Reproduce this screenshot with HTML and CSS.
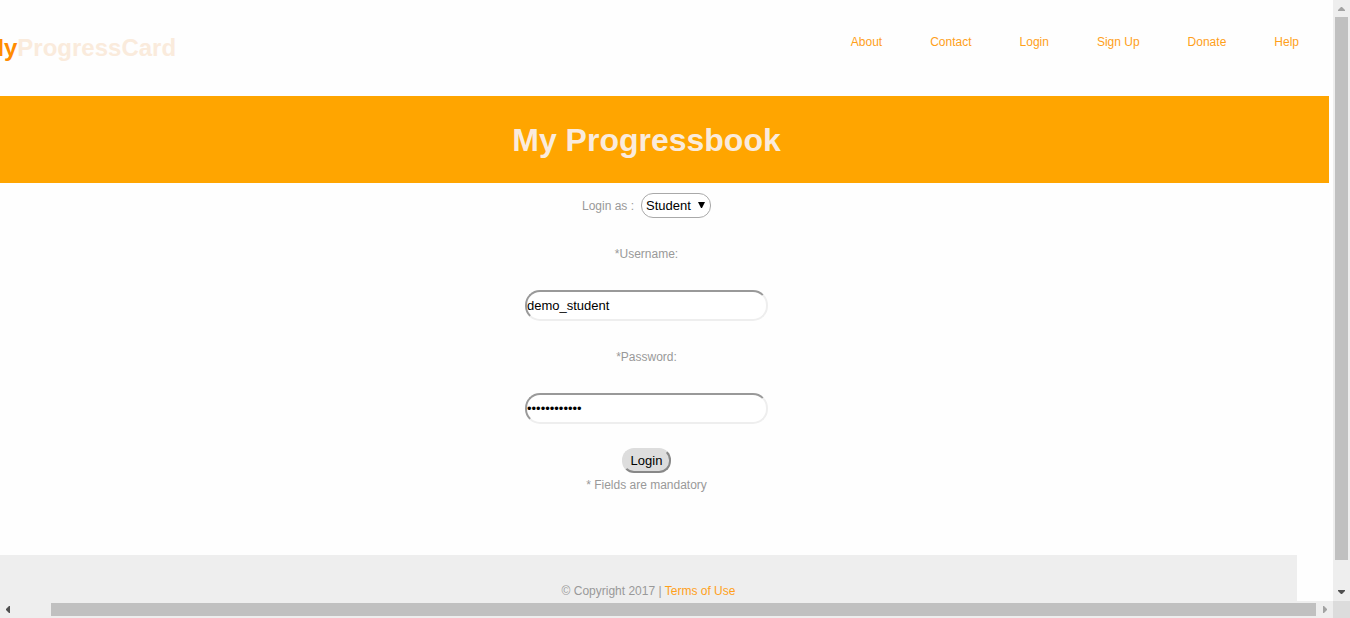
FILE: index.html
```html
<!DOCTYPE html>
<html lang="en">
<head>
<meta charset="utf-8">
<title>My Progressbook</title>
<link rel="stylesheet" href="styles.css">
</head>
<body>
<div class="viewport">
  <div class="page">
    <header class="header">
      <div class="logo"><span class="logo-accent">My</span>ProgressCard</div>
      <nav class="nav">
        <a href="#about">About</a>
        <a href="#contact">Contact</a>
        <a href="#login">Login</a>
        <a href="#signup">Sign Up</a>
        <a href="#donate">Donate</a>
        <a href="#help">Help</a>
      </nav>
    </header>
    <div class="banner"><h1>My Progressbook</h1></div>
    <form class="form">
      <div class="role">
        <label for="role">Login as :</label>
        <span class="select-wrap">
          <select id="role"><option>Student</option></select>
          <svg class="caret" width="8" height="8" viewBox="0 0 8 8" aria-hidden="true"><path d="M1 1h7L5 7H4z" fill="#000"/></svg>
        </span>
      </div>
      <label class="field-label" for="username">*Username:</label>
      <input class="field" id="username" type="text" value="demo_student">
      <label class="field-label" for="password">*Password:</label>
      <input class="field" id="password" type="password" value="studentdemo1">
      <button class="submit" type="button">Login</button>
      <p class="note">* Fields are mandatory</p>
    </form>
    <footer class="footer">© Copyright 2017 | <a href="#terms">Terms of Use</a></footer>
  </div>
  <div class="bar bar-vertical" aria-hidden="true">
    <svg class="arrow" viewBox="0 0 17 17"><path d="M5 11h7v-1L9 7H8L5 10z" fill="#a3a3a3"/></svg>
    <div class="thumb"></div>
    <svg class="arrow" viewBox="0 0 17 17"><path d="M5 6h7v1L9 10H8L5 7z" fill="#505050"/></svg>
  </div>
  <div class="bar bar-horizontal" aria-hidden="true">
    <svg class="arrow" viewBox="0 0 17 17"><path d="M10 5v7H9L6 9V8l3-3z" fill="#505050"/></svg>
    <div class="thumb"></div>
    <svg class="arrow" viewBox="0 0 17 17"><path d="M7 5v7h1l3-3V8L8 5z" fill="#a3a3a3"/></svg>
  </div>
  <div class="corner"></div>
</div>
</body>
</html>
```
FILE: styles.css
```css
* { box-sizing: border-box; }

body {
  margin: 0;
  background: #fefefe;
  color: #999;
  font: 12px/16px "Liberation Sans", Arial, sans-serif;
}

a { color: #ffa01a; text-decoration: none; }

.viewport {
  display: grid;
  grid-template-columns: minmax(0, 1fr) 17px;
  grid-template-rows: minmax(0, 1fr) 17px;
  height: 100vh;
}

/* The page is wider than the window and scrolled to the right. */
.page {
  display: flex;
  flex-direction: column;
  overflow: hidden;
  padding-right: 36px;
}

.header {
  display: flex;
  flex-shrink: 0;
  justify-content: space-between;
  height: 96px;
  margin: 0 -2px 0 -16px;
  padding-top: 34px;
}

.logo {
  color: #faebdc;
  font-size: 24px;
  font-weight: bold;
  line-height: 28px;
}

.logo-accent { color: #ff8c00; }

.nav { display: flex; gap: 48px; }

.banner {
  flex-shrink: 0;
  margin: 0 -32px 0 -36px;
  padding: 25px 0 24px;
  background: #ffa500;
}

.banner h1 {
  margin: 0;
  color: #faebdc;
  font-size: 32px;
  line-height: 38px;
  text-align: center;
}

.form {
  display: flex;
  flex-direction: column;
  align-items: center;
  flex-shrink: 0;
  margin-left: -4px;
  padding-top: 10px;
}

.role { display: flex; align-items: center; gap: 7px; }

.select-wrap { position: relative; display: flex; }

.select-wrap select {
  appearance: none;
  width: 70px;
  height: 25px;
  padding: 0 4px;
  border: 1px solid #a9a9a9;
  border-radius: 12px;
  background: #fff;
  color: #000;
  font: 13px "Liberation Sans", Arial, sans-serif;
}

.caret {
  position: absolute;
  top: 8px;
  right: 6px;
  pointer-events: none;
}

.field-label { margin: 28px 0; }

.field {
  width: 243px;
  height: 31px;
  padding: 0;
  border: 2px solid;
  border-color: #999 #eee #eee #999;
  border-radius: 15px;
  background: #fff;
  color: #000;
  font: 13px "Liberation Sans", Arial, sans-serif;
}

.submit {
  height: 25px;
  margin-top: 24px;
  padding: 0 7px;
  border: 2px solid;
  border-color: #ddd #888 #888 #ddd;
  border-radius: 12px;
  background: #ddd;
  color: #000;
  font: 13px "Liberation Sans", Arial, sans-serif;
}

.note { margin: 4px 0 0; }

.footer {
  flex: 1 0 auto;
  margin-top: 62px;
  padding-top: 28px;
  background: #eee;
  text-align: center;
}

.bar { display: flex; background: #eee; }
.bar-vertical { flex-direction: column; }
.arrow { flex: none; width: 17px; height: 17px; }
.thumb { flex: 1; background: #c0c0c0; }
.bar-vertical .thumb { margin: 0 2px 24px; }
.bar-horizontal .thumb { margin: 2px 0 2px 34px; }
.corner { background: #dcdcdc; }
```
